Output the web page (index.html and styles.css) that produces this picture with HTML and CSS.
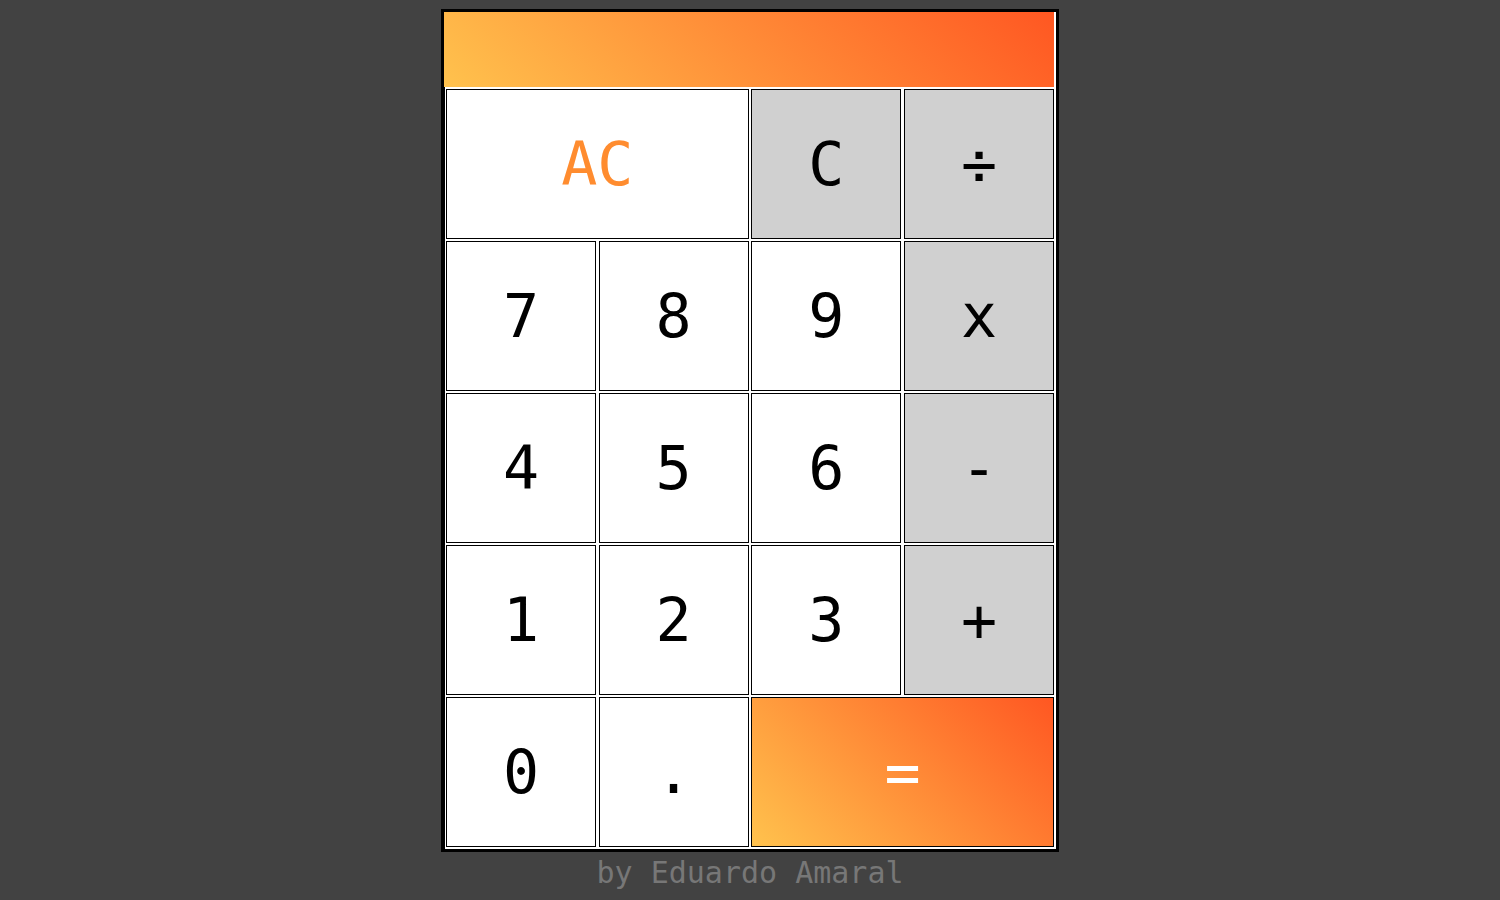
FILE: index.html
```html
<!DOCTYPE html>
<html lang="en">
<head>
<meta charset="utf-8">
<title>Calculator</title>
<link rel="stylesheet" href="styles.css">
</head>
<body>
<div class="calc">
  <div class="display"></div>
  <div class="keys">
    <button class="key ac wide">AC</button>
    <button class="key op">C</button>
    <button class="key op">÷</button>
    <button class="key">7</button>
    <button class="key">8</button>
    <button class="key">9</button>
    <button class="key op">x</button>
    <button class="key">4</button>
    <button class="key">5</button>
    <button class="key">6</button>
    <button class="key op">-</button>
    <button class="key">1</button>
    <button class="key">2</button>
    <button class="key">3</button>
    <button class="key op">+</button>
    <button class="key">0</button>
    <button class="key">.</button>
    <button class="key eq wide">=</button>
  </div>
</div>
<p class="credit">by Eduardo Amaral</p>
</body>
</html>
```

FILE: styles.css
```css
html, body {
  margin: 0;
  padding: 0;
  background: #424242;
  font-family: "DejaVu Sans Mono", "Liberation Mono", monospace;
}

.calc {
  width: 612px;
  margin: 9px auto 0;
  border: 3px solid #000;
  background: #fff;
}

.display {
  width: 610px;
  height: 75px;
  background: linear-gradient(45deg, #ffc24d 0%, #ff5722 100%);
}

.keys {
  display: grid;
  grid-template-columns: repeat(4, 150px);
  grid-auto-rows: 150px;
  column-gap: 2.67px;
  row-gap: 2px;
  padding: 2px 0 2px 1px;
  border-left: 1px solid #000;
}

.key {
  box-sizing: border-box;
  margin: 0;
  padding: 0;
  border: 1px solid #000;
  border-radius: 0;
  background: #fff;
  color: #000;
  font-family: "DejaVu Sans Mono", "Liberation Mono", monospace;
  font-size: 60px;
  font-weight: 400;
  line-height: 1;
}

.wide {
  grid-column: span 2;
}

.op {
  background: #d0d0d0;
}

.ac {
  color: #ff8c2f;
}

.eq {
  color: #fff;
  background: linear-gradient(45deg, #ffc24d 0%, #ff5722 100%);
}

.credit {
  margin: 4px 0 0;
  text-align: center;
  color: #777;
  font-size: 30px;
  line-height: 34px;
}
```
